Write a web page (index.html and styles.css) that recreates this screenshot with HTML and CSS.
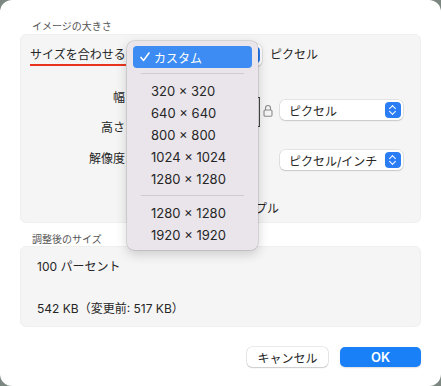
FILE: index.html
```html
<!DOCTYPE html>
<html lang="ja">
<head>
  <meta charset="UTF-8">
  <meta name="viewport" content="width=device-width, initial-scale=1.0">
  <title>イメージの大きさ</title>
  <link rel="stylesheet" href="styles.css">
</head>
<body>
  <div class="window">
    <div class="section-title">イメージの大きさ</div>
    <div class="group">
      <div class="form">
        <div class="fit-label"><span class="underlined">サイズを合わせる</span></div>
        <div class="popup-button wide"><span></span><i class="stepper"></i></div>
        <div class="unit-text">ピクセル</div>

        <div class="label row-w">幅</div>
        <div class="text-field row-w"></div>
        <div class="label row-h">高さ</div>
        <div class="text-field row-h"></div>
        <div class="bracket"></div>
        <div class="lock">
          <svg width="10" height="13" viewBox="0 0 10 13">
            <path d="M2.5 6V4a2.5 2.5 0 0 1 5 0v2" fill="none" stroke="#8a8a8a" stroke-width="1.1"/>
            <rect x="1" y="6" width="8" height="6.3" rx="1.2" fill="none" stroke="#8a8a8a" stroke-width="1.1"/>
          </svg>
        </div>
        <div class="popup-button unit-size"><span>ピクセル</span><i class="stepper"></i></div>

        <div class="label row-r">解像度</div>
        <div class="text-field row-r"></div>
        <div class="popup-button row-r unit-res"><span>ピクセル/インチ</span><i class="stepper"></i></div>

        <div class="resample"><i class="checkbox"></i>イメージをリサンプル</div>
      </div>
    </div>

    <div class="section-title second">調整後のサイズ</div>
    <div class="group result">
      <p>100 パーセント</p>
      <p>542 KB（変更前: 517 KB）</p>
    </div>

    <div class="buttons">
      <button class="btn">キャンセル</button>
      <button class="btn primary">OK</button>
    </div>

    <div class="menu">
      <div class="menu-item selected">
        <svg class="check" width="10" height="10" viewBox="0 0 10 10">
          <path d="M1 5.4l2.6 3L9 1" fill="none" stroke="#fff" stroke-width="1.6" stroke-linecap="round" stroke-linejoin="round"/>
        </svg>カスタム
      </div>
      <div class="menu-sep"></div>
      <div class="menu-item">320 × 320</div>
      <div class="menu-item">640 × 640</div>
      <div class="menu-item">800 × 800</div>
      <div class="menu-item">1024 × 1024</div>
      <div class="menu-item">1280 × 1280</div>
      <div class="menu-sep"></div>
      <div class="menu-item">1280 × 1280</div>
      <div class="menu-item">1920 × 1920</div>
    </div>
  </div>
</body>
</html>
```

FILE: styles.css
```css
html {
  background-color: #7d8781;
}

body {
  margin: 0;
  padding: 0;
  font-family: Inter, "Noto Sans CJK JP", sans-serif;
  font-size: 12px;
  color: #262626;
}

.window {
  position: relative;
  width: 441px;
  height: 386px;
  box-sizing: border-box;
  padding: 19px 20px 0 20px;
  background-color: #fff;
  border-radius: 12px;
}

.section-title {
  height: 14px;
  line-height: 14px;
  margin: 0 0 1px 12px;
  font-size: 10px;
  color: #555;
}

.section-title.second {
  margin-top: 9px;
  margin-bottom: 0;
}

.group {
  background-color: #f5f5f5;
  border: 1px solid #efefef;
  border-radius: 6px;
  box-sizing: border-box;
}

.form {
  display: grid;
  grid-template-columns: 99px 127px 6px 18px 123px;
  row-gap: 8px;
  padding: 9px 0 4px 9px;
  align-items: center;
}

.fit-label,
.popup-button.wide,
.unit-text {
  grid-row: 1;
  height: 22px;
  margin-bottom: 13px;
}

.fit-label {
  grid-column: 1;
  line-height: 22px;
}

.underlined {
  display: inline-block;
  line-height: 18px;
  border-bottom: 2px solid #e8341f;
}

.popup-button.wide {
  grid-column: 2 / span 2;
}

.unit-text {
  grid-column: 4 / span 2;
  padding-left: 8px;
  line-height: 22px;
}

.label {
  grid-column: 1;
  height: 22px;
  line-height: 22px;
  text-align: right;
  padding-right: 4px;
}

.row-w { grid-row: 2; }
.row-h { grid-row: 3; }
.row-r { grid-row: 4; }

.text-field {
  grid-column: 2;
  height: 20px;
  margin-right: 4px;
  background-color: #fff;
  border: 1px solid #d6d6d6;
}

.bracket {
  grid-column: 3;
  grid-row: 2 / span 2;
  align-self: stretch;
  margin: 10px 2px 12px 0;
  border: 1px solid #444;
  border-left: none;
}

.lock {
  grid-column: 4;
  grid-row: 2 / span 2;
  padding-left: 1px;
  margin-bottom: 6px;
  height: 13px;
}

.lock svg {
  display: block;
}

.popup-button {
  display: flex;
  align-items: center;
  justify-content: space-between;
  box-sizing: border-box;
  height: 20px;
  padding: 0 2px 0 9px;
  background-color: #fff;
  border-radius: 5px;
  box-shadow: 0 0 0 0.5px rgba(0, 0, 0, 0.14), 0 1px 1.5px rgba(0, 0, 0, 0.12);
}

.popup-button.wide {
  height: 22px;
}

.unit-size {
  grid-column: 5;
  grid-row: 2 / span 2;
  margin-bottom: 6px;
}

.unit-res {
  grid-column: 5;
  margin-top: 3px;
}

.stepper {
  position: relative;
  width: 16px;
  height: 16px;
  border-radius: 4px;
  background-color: #2b7df5;
}

.stepper::before,
.stepper::after {
  content: "";
  position: absolute;
  left: 5px;
  width: 4px;
  height: 4px;
  border: solid #fff;
  border-width: 1.5px 0 0 1.5px;
}

.stepper::before {
  top: 4px;
  transform: rotate(45deg);
}

.stepper::after {
  top: 7px;
  transform: rotate(225deg);
}

.resample {
  grid-column: 2 / span 3;
  grid-row: 5;
  justify-self: end;
  display: flex;
  align-items: center;
  gap: 5px;
  height: 22px;
  margin-top: 18px;
  margin-right: 1px;
}

.checkbox {
  width: 12px;
  height: 12px;
  border-radius: 3px;
  background-color: #2b7df5;
}

.result {
  height: 81px;
  padding: 13px 16px 0 16px;
}

.result p {
  margin: 0 0 28px 0;
  height: 14px;
  line-height: 14px;
}

.buttons {
  display: flex;
  justify-content: flex-end;
  gap: 12px;
  margin-top: 20px;
}

.btn {
  width: 81px;
  height: 20px;
  padding: 0;
  font-family: Inter, "Noto Sans CJK JP", sans-serif;
  font-size: 12px;
  color: #262626;
  background-color: #fff;
  border: none;
  border-radius: 5px;
  box-shadow: 0 0 0 0.5px rgba(0, 0, 0, 0.16), 0 1px 1.5px rgba(0, 0, 0, 0.14);
}

.btn.primary {
  color: #fff;
  font-size: 13px;
  font-weight: 600;
  background-color: #1a80f8;
  box-shadow: 0 1px 1.5px rgba(0, 0, 0, 0.12);
}

.menu {
  position: absolute;
  left: 127px;
  top: 41px;
  width: 131px;
  height: 209px;
  box-sizing: border-box;
  padding: 5px 6px;
  background-color: #e9e5eb;
  border-radius: 7px;
  box-shadow: 0 0 0 0.5px rgba(0, 0, 0, 0.2), 0 4px 12px rgba(0, 0, 0, 0.18);
}

.menu-item {
  display: flex;
  align-items: center;
  height: 22px;
  padding-left: 18px;
  font-size: 13px;
  color: #262626;
  border-radius: 4px;
}

.menu-item.selected {
  padding-left: 7px;
  background-color: #3d8cf3;
  color: #fff;
  font-size: 12px;
}

.check {
  margin-right: 4px;
}

.menu-sep {
  height: 1px;
  margin: 5px 8px 6px 8px;
  background-color: #cfcbd2;
}
```
